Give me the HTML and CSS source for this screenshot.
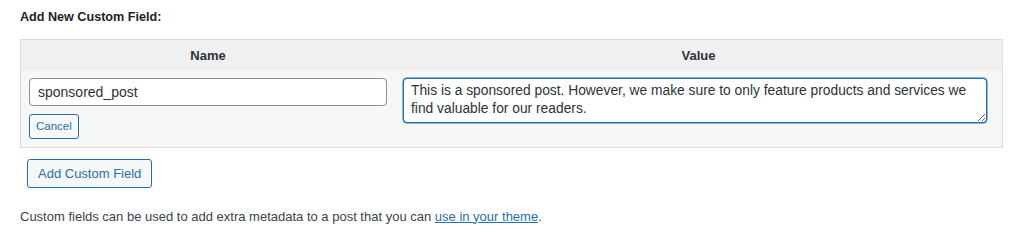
FILE: index.html
```html
<!DOCTYPE html>
<html lang="en">
<head>
    <meta charset="UTF-8">
    <title>Custom Fields</title>
    <link rel="stylesheet" href="styles.css">
</head>
<body>

<div class="wrap">
    <p class="newtitle">Add New Custom Field:</p>
    <table class="newmeta">
        <thead>
        <tr>
            <th class="col-name">Name</th>
            <th class="col-value">Value</th>
        </tr>
        </thead>
        <tbody>
        <tr>
            <td class="col-name">
                <input type="text" id="metakey" value="sponsored_post"/>
                <div class="cancel-row">
                    <button class="button button-small">Cancel</button>
                </div>
            </td>
            <td class="col-value">
                <textarea id="metavalue" rows="2">This is a sponsored post. However, we make sure to only feature products and services we find valuable for our readers.</textarea>
            </td>
        </tr>
        </tbody>
    </table>
    <div class="submit">
        <button class="button">Add Custom Field</button>
    </div>
    <p class="note">Custom fields can be used to add extra metadata to a post that you can <a href="#">use in your theme</a>.</p>
</div>

</body>
</html>
```

FILE: styles.css
```css
* {
    margin: 0;
    padding: 0;
    box-sizing: border-box;
}

html, body {
    width: 100%;
    background: #fff;
    font-family: "Liberation Sans", Arial, sans-serif;
    font-size: 13px;
    color: #1d2327;
}

.wrap {
    padding: 7px 20px 0 20px;
}

.newtitle {
    font-weight: bold;
    font-size: 12.6px;
    line-height: 20px;
    color: #1d2327;
}

.newmeta {
    width: 983px;
    margin-top: 12px;
    border: 1px solid #dcdcde;
    border-collapse: collapse;
    background-color: #f6f7f7;
}

.newmeta th {
    height: 31px;
    background-color: #f0f0f1;
    text-align: center;
    font-weight: bold;
    font-size: 13px;
    color: #2c3338;
}

.newmeta th.col-name {
    width: 374px;
}

.newmeta td {
    vertical-align: top;
    padding: 7px 8px 8px 8px;
}

#metakey {
    display: block;
    width: 358px;
    height: 28px;
    padding: 0 8px;
    border: 1px solid #8c8f94;
    border-radius: 4px;
    font-family: inherit;
    font-size: 14px;
    color: #2c3338;
    background: #fff;
}

.cancel-row {
    margin-top: 8px;
}

.button {
    display: inline-block;
    height: 29px;
    padding: 0 10px;
    border: 1px solid #2271b1;
    border-radius: 3px;
    background: #f6f7f7;
    color: #2271b1;
    font-family: inherit;
    font-size: 13px;
    cursor: pointer;
}

.button-small {
    height: 25px;
    padding: 0 6px;
    font-size: 11.5px;
}

#metavalue {
    display: block;
    width: 584px;
    height: 45px;
    padding: 3px 7px 2px 7px;
    border: 1px solid #2271b1;
    border-radius: 4px;
    box-shadow: 0 0 0 0.5px #2271b1;
    font-family: inherit;
    font-size: 13.8px;
    line-height: 18px;
    color: #2c3338;
    background: #fff;
    resize: vertical;
    overflow: hidden;
}

.submit {
    margin-top: 11px;
    padding-left: 7px;
}

.note {
    margin-top: 20px;
    line-height: 18px;
    color: #3c434a;
}

.note a {
    color: #2271b1;
}
```
